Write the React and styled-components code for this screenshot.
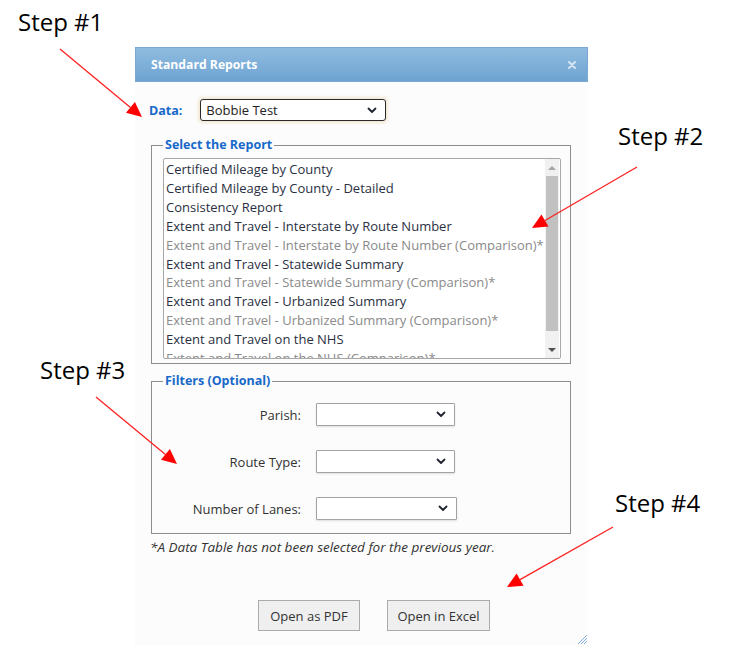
import React from "react";
import styled, { createGlobalStyle } from "styled-components";

const GlobalStyle = createGlobalStyle`
    html, body {
        margin: 0;
        padding: 0;
        background: #ffffff;
    }
`;

const reports = [
    { name: "Certified Mileage by County" },
    { name: "Certified Mileage by County - Detailed" },
    { name: "Consistency Report" },
    { name: "Extent and Travel - Interstate by Route Number" },
    { name: "Extent and Travel - Interstate by Route Number (Comparison)*", disabled: true },
    { name: "Extent and Travel - Statewide Summary" },
    { name: "Extent and Travel - Statewide Summary (Comparison)*", disabled: true },
    { name: "Extent and Travel - Urbanized Summary" },
    { name: "Extent and Travel - Urbanized Summary (Comparison)*", disabled: true },
    { name: "Extent and Travel on the NHS" },
    { name: "Extent and Travel on the NHS (Comparison)*", disabled: true },
];

const filters = [
    { label: "Parish:", width: 139 },
    { label: "Route Type:", width: 139 },
    { label: "Number of Lanes:", width: 141 },
];

const steps = [
    { text: "Step #1", x: 18, y: 6 },
    { text: "Step #2", x: 618, y: 120 },
    { text: "Step #3", x: 40, y: 354 },
    { text: "Step #4", x: 615, y: 487 },
];

const arrows = [
    { from: [60, 49], to: [142, 117] },
    { from: [637, 167], to: [532, 228] },
    { from: [96, 397], to: [177, 464] },
    { from: [613, 527], to: [507, 587] },
];

const Chevron = () => (
    <svg width="10" height="7" viewBox="0 0 10 7">
        <path
            d="M1.5 1.5 L5 5 L8.5 1.5"
            fill="none"
            stroke="#1f2430"
            strokeWidth="1.8"
            strokeLinecap="round"
            strokeLinejoin="round"
        />
    </svg>
);

const Arrow = ({ from, to }) => {
    const dx = to[0] - from[0];
    const dy = to[1] - from[1];
    const len = Math.hypot(dx, dy);
    const ux = dx / len;
    const uy = dy / len;
    const bx = to[0] - ux * 15;
    const by = to[1] - uy * 15;
    const nx = -uy * 7;
    const ny = ux * 7;
    const head = `${to[0]},${to[1]} ${bx + nx},${by + ny} ${bx - nx},${by - ny}`;
    return (
        <g>
            <line
                x1={from[0]}
                y1={from[1]}
                x2={bx}
                y2={by}
                stroke="#ff2020"
                strokeWidth="1.3"
            />
            <polygon points={head} fill="#ff0000" />
        </g>
    );
};

export default function App() {
    return (
        <Page>
            <GlobalStyle />
            <Dialog>
                <TitleBar>
                    <Title>Standard Reports</Title>
                    <CloseIcon width="8" height="8" viewBox="0 0 8 8">
                        <path
                            d="M1 1 L7 7 M7 1 L1 7"
                            stroke="#d6e4f1"
                            strokeWidth="2"
                            strokeLinecap="round"
                        />
                    </CloseIcon>
                </TitleBar>
                <Content>
                    <DataRow>
                        <DataLabel>Data:</DataLabel>
                        <SelectBox width={186} focused>
                            <SelectText>Bobbie Test</SelectText>
                            <Chevron />
                        </SelectBox>
                    </DataRow>

                    <Group>
                        <Legend>Select the Report</Legend>
                        <ListBox>
                            <ListItems>
                                {reports.map((r) => (
                                    <ListItem key={r.name} disabled={r.disabled}>
                                        {r.name}
                                    </ListItem>
                                ))}
                            </ListItems>
                            <ScrollBar>
                                <ScrollButton>
                                    <TriangleUp />
                                </ScrollButton>
                                <ScrollTrack>
                                    <ScrollThumb />
                                </ScrollTrack>
                                <ScrollButton>
                                    <TriangleDown />
                                </ScrollButton>
                            </ScrollBar>
                        </ListBox>
                    </Group>

                    <FilterGroup>
                        <Legend>Filters (Optional)</Legend>
                        <FilterGrid>
                            {filters.map((f) => (
                                <React.Fragment key={f.label}>
                                    <FilterLabel>{f.label}</FilterLabel>
                                    <SelectBox width={f.width} height={23} light>
                                        <SelectText />
                                        <Chevron />
                                    </SelectBox>
                                </React.Fragment>
                            ))}
                        </FilterGrid>
                    </FilterGroup>

                    <Note>*A Data Table has not been selected for the previous year.</Note>

                    <ButtonRow>
                        <Button width={102}>Open as PDF</Button>
                        <Button width={103}>Open in Excel</Button>
                    </ButtonRow>
                </Content>
                <Grip width="12" height="12" viewBox="0 0 12 12">
                    <path
                        d="M11 2 L2 11 M11 5 L5 11 M11 8 L8 11"
                        stroke="#7fb0e2"
                        strokeWidth="1"
                    />
                </Grip>
            </Dialog>

            {steps.map((s) => (
                <StepLabel key={s.text} style={{ left: s.x, top: s.y }}>
                    {s.text}
                </StepLabel>
            ))}
            <Annotations width="733" height="645" viewBox="0 0 733 645">
                {arrows.map((a, i) => (
                    <Arrow key={i} from={a.from} to={a.to} />
                ))}
            </Annotations>
        </Page>
    );
}

const Page = styled.div`
    position: relative;
    width: 733px;
    height: 645px;
    overflow: hidden;
    box-sizing: border-box;
    padding: 47px 0 0 135px;
    background: #ffffff;
    font-family: "Open Sans", "Noto Sans", sans-serif;
`;

const Dialog = styled.section`
    position: relative;
    width: 453px;
    height: 598px;
    background: #fcfcfc;
    display: flex;
    flex-direction: column;
`;

const TitleBar = styled.header`
    height: 35px;
    box-sizing: border-box;
    display: flex;
    align-items: center;
    justify-content: space-between;
    padding: 0 11px 0 15px;
    background: linear-gradient(to bottom, #8fbbdf 0%, #80b1da 45%, #6ea3d0 100%);
    border: 1px solid #79a8d2;
`;

const Title = styled.span`
    color: #ffffff;
    font-size: 12.2px;
    font-weight: 700;
`;

const CloseIcon = styled.svg`
    display: block;
`;

const Content = styled.div`
    display: flex;
    flex-direction: column;
    padding: 0 17px 0 14px;
`;

const DataRow = styled.div`
    display: flex;
    align-items: center;
    margin-top: 17px;
    gap: 18px;
`;

const DataLabel = styled.span`
    color: #1669c9;
    font-size: 12.5px;
    font-weight: 700;
`;

const SelectBox = styled.div`
    width: ${({ width }) => width}px;
    height: ${({ height }) => height || 22}px;
    box-sizing: border-box;
    display: flex;
    align-items: center;
    justify-content: space-between;
    padding: 0 8px 0 5px;
    background: #ffffff;
    border: 1px solid ${({ light }) => (light ? "#a3a3a3" : "#2a2a2a")};
    border-radius: ${({ light }) => (light ? "1px" : "3px")};
    box-shadow: ${({ focused }) =>
        focused
            ? "0 0 3px 2px rgba(235, 215, 180, 0.55)"
            : "0 1px 2px rgba(0, 0, 0, 0.12)"};
`;

const SelectText = styled.span`
    font-size: 13px;
    color: #222222;
`;

const Group = styled.fieldset`
    margin: 16px 0 0 2px;
    padding: 5px 9px 4px 11px;
    border: 1px solid #8e8e8e;
    min-width: 0;
`;

const FilterGroup = styled(Group)`
    margin-top: 9px;
    padding: 14px 11px 13px 11px;
`;

const Legend = styled.legend`
    padding: 0 2px;
    font-size: 12.5px;
    line-height: 16px;
    font-weight: 700;
    color: #1669c9;
`;

const ListBox = styled.div`
    height: 201px;
    box-sizing: border-box;
    display: flex;
    border: 1px solid #a8a8a8;
    border-radius: 2px;
    background: #ffffff;
    overflow: hidden;
`;

const ListItems = styled.ul`
    flex: 1;
    margin: 0;
    padding: 1px 0 0 2px;
    list-style: none;
    overflow: hidden;
`;

const ListItem = styled.li`
    font-size: 13px;
    line-height: 18.9px;
    white-space: nowrap;
    color: ${({ disabled }) => (disabled ? "#8a8a8a" : "#2a2f42")};
`;

const ScrollBar = styled.div`
    width: 14px;
    margin-right: 1px;
    display: flex;
    flex-direction: column;
    background: #f1f1f1;
`;

const ScrollButton = styled.div`
    height: 17px;
    display: flex;
    align-items: center;
    justify-content: center;
`;

const TriangleUp = styled.span`
    width: 0;
    height: 0;
    border-left: 4px solid transparent;
    border-right: 4px solid transparent;
    border-bottom: 4px solid #a3a3a3;
`;

const TriangleDown = styled.span`
    width: 0;
    height: 0;
    border-left: 4px solid transparent;
    border-right: 4px solid transparent;
    border-top: 4px solid #505050;
`;

const ScrollTrack = styled.div`
    flex: 1;
    padding: 0 1px;
`;

const ScrollThumb = styled.div`
    height: 155px;
    background: #c1c1c1;
`;

const FilterGrid = styled.div`
    display: grid;
    grid-template-columns: 138px auto;
    column-gap: 15px;
    row-gap: 24px;
    align-items: center;
    justify-items: start;
`;

const FilterLabel = styled.span`
    justify-self: end;
    font-size: 13px;
    color: #333333;
`;

const Note = styled.p`
    margin: 4px 0 0 1px;
    font-size: 13.5px;
    line-height: 18px;
    font-style: italic;
    color: #333333;
`;

const ButtonRow = styled.div`
    display: flex;
    gap: 27px;
    margin-top: 44px;
    padding-left: 109px;
`;

const Button = styled.button`
    width: ${({ width }) => width}px;
    height: 31px;
    padding: 0;
    background: #efefef;
    border: 1px solid #ababab;
    border-radius: 0;
    font-family: "Open Sans", "Noto Sans", sans-serif;
    font-size: 13px;
    color: #333333;
`;

const Grip = styled.svg`
    position: absolute;
    right: 0;
    bottom: 0;
`;

const StepLabel = styled.div`
    position: absolute;
    font-size: 24px;
    line-height: 32px;
    color: #000000;
    white-space: nowrap;
`;

const Annotations = styled.svg`
    position: absolute;
    left: 0;
    top: 0;
    pointer-events: none;
`;
